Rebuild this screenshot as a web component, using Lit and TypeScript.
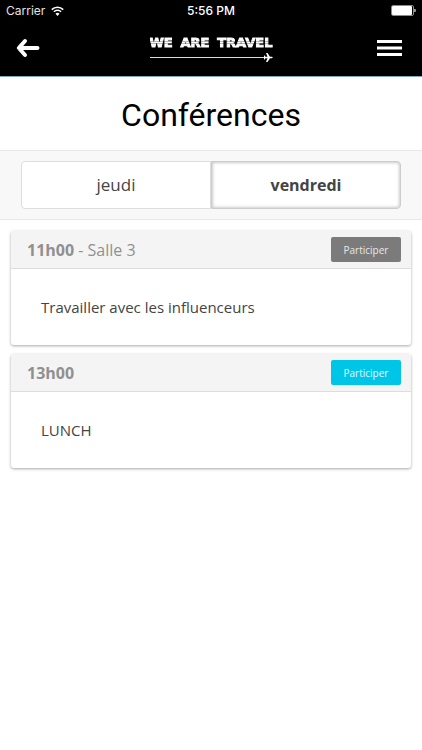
import { LitElement, html, css, svg, nothing } from "lit";
import { customElement, property, state } from "lit/decorators.js";
import { classMap } from "lit/directives/class-map.js";

interface Session {
  time: string;
  room?: string;
  title: string;
  open: boolean;
}

const DAYS = ["jeudi", "vendredi"];

const SESSIONS: Session[] = [
  { time: "11h00", room: "Salle 3", title: "Travailler avec les influenceurs", open: false },
  { time: "13h00", title: "LUNCH", open: true },
];

const wifiIcon = svg`
  <path d="M0.8 3.6 A8 8 0 0 1 12.2 3.6" fill="none" stroke="#fff" stroke-width="1.6"/>
  <path d="M2.9 5.8 A5 5 0 0 1 10.1 5.8" fill="none" stroke="#fff" stroke-width="1.5"/>
  <path d="M6.5 10 L4.5 7.8 A2.9 2.9 0 0 1 8.5 7.8 Z" fill="#fff"/>`;

@customElement("status-bar")
class StatusBar extends LitElement {
  static styles = css`
    :host {
      display: grid;
      grid-template-columns: 1fr auto 1fr;
      align-items: center;
      height: 22px;
      padding: 0 6px;
      color: #fff;
      font: 12px/22px Inter, sans-serif;
    }
    .carrier { display: flex; align-items: center; gap: 6px; color: #e4e4e4; }
    .clock { font-weight: 500; }
    .battery { justify-self: end; }
    svg { display: block; }
  `;
  render() {
    return html`
      <span class="carrier">Carrier
        <svg width="13" height="11" viewBox="0 0 13 11" aria-hidden="true">${wifiIcon}</svg>
      </span>
      <span class="clock">5:56 PM</span>
      <svg class="battery" width="25" height="12" viewBox="0 0 25 12" aria-hidden="true">
        <rect x="0.5" y="0.5" width="22" height="10" rx="1.5" fill="#000" stroke="#8a8a8a"/>
        <rect x="1" y="1" width="20" height="9" rx="1" fill="#fff"/>
        <path d="M23 4 h1 a1 1 0 0 1 1 1 v1 a1 1 0 0 1 -1 1 h-1 Z" fill="#999"/>
      </svg>
    `;
  }
}

@customElement("nav-bar")
class NavBar extends LitElement {
  static styles = css`
    :host {
      display: grid;
      grid-template-columns: 1fr auto 1fr;
      align-items: center;
      height: 52px;
      padding: 0 16px 2px;
      color: #fff;
    }
    button {
      display: flex;
      padding: 0;
      border: 0;
      background: none;
      color: inherit;
      cursor: pointer;
    }
    .menu { justify-self: end; margin-right: 4px; }
    .brand { display: grid; gap: 2px; color: inherit; text-decoration: none; }
    .name {
      display: flex;
      justify-content: space-between;
      font: bold 13px/16px "DejaVu Sans", sans-serif;
      white-space: nowrap;
      background: linear-gradient(#fff 6px, #bbb 6px, #bbb 7px, #fff 7px, #fff 8px, #bbb 8px, #bbb 9px, #fff 9px);
      background-clip: text;
      -webkit-background-clip: text;
      -webkit-text-stroke: 1px transparent;
      color: transparent;
    }
    svg { display: block; }
  `;
  render() {
    return html`
      <button aria-label="Retour">
        <svg width="24" height="20" viewBox="0 0 24 20">
          <path d="M9 3 L2.8 10 L9 17 M3 10 H21.5" fill="none" stroke="#fff" stroke-width="4" stroke-linecap="round" stroke-linejoin="round"/>
        </svg>
      </button>
      <a class="brand" href="#">
        <span class="name"><span>WE</span> <span>ARE</span> <span>TRAVEL</span></span>
        <svg width="123" height="9" viewBox="0 0 123 9" aria-hidden="true">
          <path d="M0 4.5 H116" stroke="#ddd"/>
          <path d="M114 2 L115.5 3.8 H117.5 L116 0 H117.5 L120 3.8 H122 Q123.4 4.5 122 5.2 H120 L117.5 9 H116 L117.5 5.2 H115.5 L114 7 Z" fill="#fff"/>
        </svg>
      </a>
      <button class="menu" aria-label="Menu">
        <svg width="25" height="18" viewBox="0 0 25 18">
          <path d="M0 2.5 H25 M0 9 H25 M0 15.5 H25" stroke="#fff" stroke-width="3"/>
        </svg>
      </button>
    `;
  }
}

@customElement("session-card")
class SessionCard extends LitElement {
  @property({ attribute: false }) session!: Session;

  static styles = css`
    :host {
      display: block;
      border-radius: 3px;
      background: #fff;
      box-shadow: 0 1px 3px rgba(0, 0, 0, 0.35);
      overflow: hidden;
    }
    header {
      display: flex;
      align-items: center;
      justify-content: space-between;
      height: 37px;
      padding: 0 10px 0 16px;
      border-bottom: 1px solid #ddd;
      background: #f4f4f4;
    }
    h2 { margin: 0; font-size: 16px; font-weight: 400; color: #909090; }
    button {
      width: 70px;
      height: 25px;
      padding: 1px 0 0;
      border: 0;
      border-radius: 2px;
      background: #7b7b7b;
      color: #e8e8e8;
      font: 10px/24px "Open Sans", sans-serif;
      cursor: pointer;
    }
    .open { background: #00c5e6; color: #e0fbff; }
    p { margin: 0; padding: 26px 30px; font-size: 15px; line-height: 24px; color: #444; }
  `;
  render() {
    const { time, room, title, open } = this.session;
    return html`
      <header>
        <h2><b>${time}</b>${room ? html` - ${room}` : nothing}</h2>
        <button class=${classMap({ open })}>Participer</button>
      </header>
      <p>${title}</p>
    `;
  }
}

@customElement("app-root")
class AppRoot extends LitElement {
  @state() private day = "vendredi";

  static styles = css`
    :host {
      display: block;
      min-height: 100vh;
      background: #fff;
      font-family: "Open Sans", sans-serif;
    }
    .top { background: #000; border-bottom: 1px solid #7fa9c4; }
    h1 {
      margin: 0;
      padding: 18px 0 15px;
      text-align: center;
      font: 400 32px/40px Roboto, sans-serif;
      color: #000;
    }
    .tabs {
      display: flex;
      padding: 10px 21px;
      background: #f8f8f8;
      border: solid #e8e8e8;
      border-width: 1px 0;
    }
    .tab {
      flex: 1;
      height: 48px;
      border: 1px solid #ddd;
      border-radius: 4px 0 0 4px;
      background: #fff;
      color: #444;
      font: 17px/24px "Open Sans", sans-serif;
      cursor: pointer;
    }
    .tab + .tab { border-left: 0; border-radius: 0 4px 4px 0; }
    .tab.active { font-size: 16px; font-weight: 700; border: 1px solid #ccc; box-shadow: inset 0 0 3px 1px #ccc; }
    .list { display: grid; gap: 9px; padding: 11px; }
  `;
  render() {
    return html`
      <div class="top"><status-bar></status-bar><nav-bar></nav-bar></div>
      <h1>Conférences</h1>
      <div class="tabs">
        ${DAYS.map(
          (d) => html`<button
            class=${classMap({ tab: true, active: d === this.day })}
            aria-pressed=${d === this.day}
            @click=${() => (this.day = d)}
          >${d}</button>`,
        )}
      </div>
      <main class="list">
        ${SESSIONS.map((s) => html`<session-card .session=${s}></session-card>`)}
      </main>
    `;
  }
}
